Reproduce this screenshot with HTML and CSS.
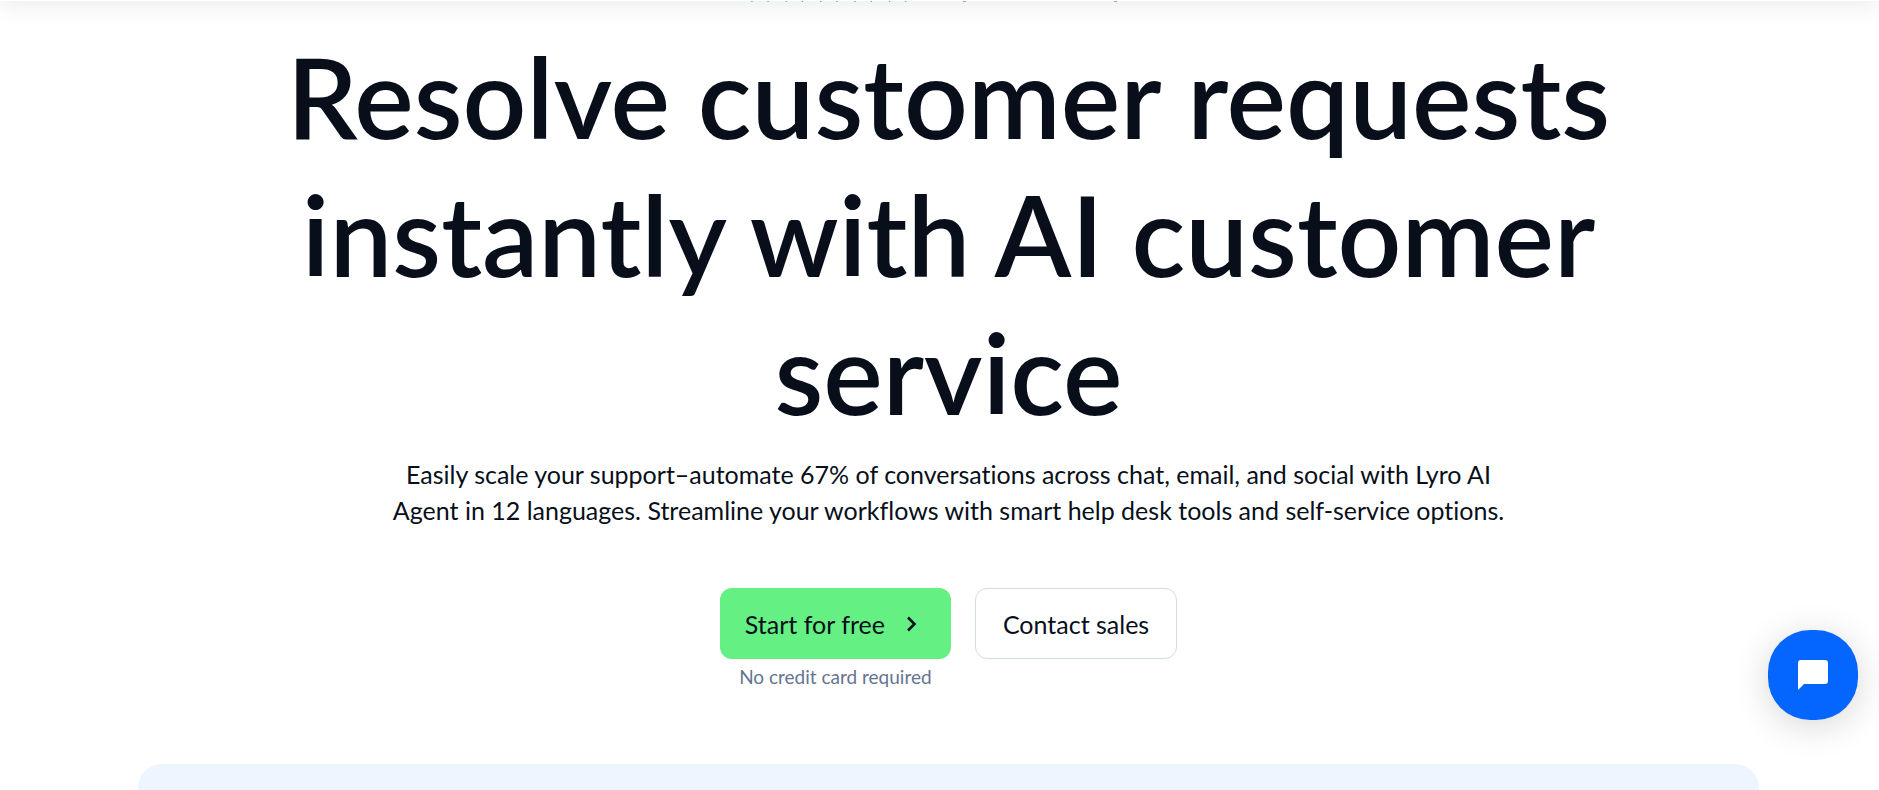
FILE: index.html
```html
<!DOCTYPE html>
<html lang="en">
<head>
    <meta charset="utf-8">
    <title>AI customer service</title>
    <link rel="stylesheet" href="styles.css">
</head>
<body>
    <header class="topbar"></header>

    <main class="page">
        <section class="hero">
            <svg class="rating" width="405" height="30" viewBox="0 0 405 30" fill="#2fc66a" aria-hidden="true">
                <defs>
                    <path id="star" d="M14 3.400l3.400 9.900 10.500.200-8.400 6.300 3.500 10.800-9-6.800-9 6.800 3.500-10.800L.1 13.500l10.500-.2z"/>
                </defs>
                <use href="#star"/>
                <use href="#star" x="34.400"/>
                <use href="#star" x="68.800"/>
                <use href="#star" x="103.200"/>
                <use href="#star" x="137.600"/>
                <path fill="#a9b0bc" d="M217 29h3v1h-3zM368 29h3v1h-3z"/>
            </svg>
            <h1>Resolve customer requests instantly with AI customer service</h1>
            <p class="lead">Easily scale your support–automate 67% of conversations across chat, email, and social with Lyro AI<br>Agent in 12 languages. Streamline your workflows with smart help desk tools and self-service options.</p>
            <div class="actions">
                <div class="action">
                    <a class="btn btn-primary" href="#">Start for free
                        <svg width="24" height="24" viewBox="0 0 24 24" fill="none" stroke="currentColor" stroke-width="2.500"><path d="M9 5.500l6.500 6.500L9 18.500"/></svg>
                    </a>
                    <span class="note">No credit card required</span>
                </div>
                <div class="action">
                    <a class="btn btn-outline" href="#">Contact sales</a>
                </div>
            </div>
        </section>
        <section class="preview"></section>
    </main>

    <button class="chat" aria-label="Open chat">
        <svg width="30" height="30" viewBox="0 0 30 30" fill="#fff"><path d="M3 0h24a3 3 0 0 1 3 3v18a3 3 0 0 1-3 3H6l-6 6V3a3 3 0 0 1 3-3z"/></svg>
    </button>
</body>
</html>
```

FILE: styles.css
```css
body {
    margin: 0;
    font-family: Lato, sans-serif;
    font-variant-ligatures: none;
    color: #080f1a;
    background-color: #fff;
}
.topbar {
    position: fixed;
    top: -89px;
    left: 0;
    right: 0;
    height: 90px;
    background-color: #fff;
    box-shadow: 0 2px 24px rgba(8, 25, 60, 0.1);
}
.page {
    display: flex;
    flex-direction: column;
    box-sizing: border-box;
    min-height: 100vh;
    padding: 0 120px 0 138px;
    overflow: hidden;
}
.hero {
    display: flex;
    flex-direction: column;
    align-items: center;
    text-align: center;
}
.rating {
    margin-top: -28px;
}
h1 {
    margin: 25px 0 0;
    max-width: 1400px;
    font-size: 112px;
    line-height: 138px;
    font-weight: 600;
}
.lead {
    margin: 15px 0 0;
    font-size: 25px;
    line-height: 36px;
}
.actions {
    display: flex;
    gap: 24px;
    margin-top: 60px;
}
.action {
    display: flex;
    flex-direction: column;
    align-items: center;
}
.btn {
    display: flex;
    align-items: center;
    gap: 14px;
    box-sizing: border-box;
    height: 71px;
    padding: 0 27px;
    border: 1px solid transparent;
    border-radius: 12px;
    font-size: 25px;
    color: #080f1a;
    text-decoration: none;
}
.btn-primary {
    padding-left: 24px;
    background-color: #64f083;
}
.btn-outline {
    border-color: #d3dbe5;
}
.note {
    font-size: 19px;
    line-height: 36px;
    color: #647491;
}
.preview {
    flex: 1;
    margin-top: 69px;
    border-radius: 24px 24px 0 0;
    background-color: #edf5ff;
}
.chat {
    position: fixed;
    right: 21px;
    bottom: 70px;
    display: flex;
    align-items: center;
    justify-content: center;
    width: 90px;
    height: 90px;
    padding: 0;
    border: none;
    border-radius: 42px;
    background-color: #0566ff;
    box-shadow: 0 6px 36px rgba(0, 0, 0, 0.16);
    cursor: pointer;
}
```
